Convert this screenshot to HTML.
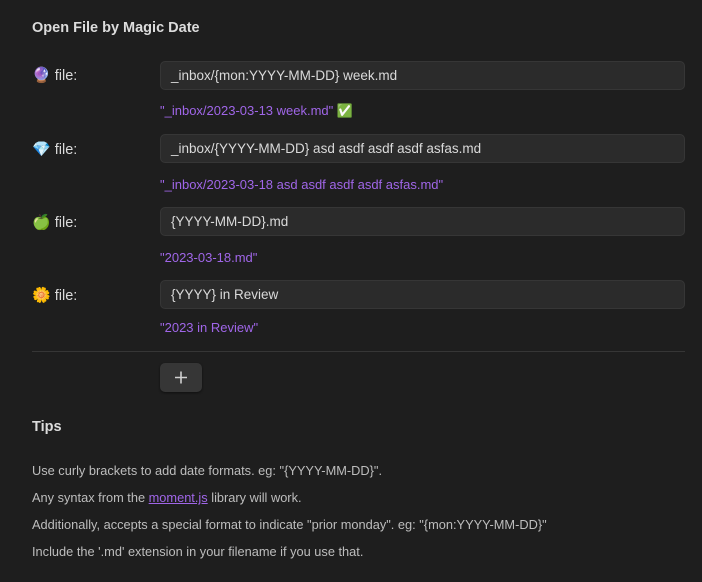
<!DOCTYPE html>
<html><head><meta charset="utf-8"><style>
body{margin:0;width:702px;height:582px;background:#1e1e1e;font-family:"Liberation Sans","Noto Sans CJK JP",sans-serif;color:#dadada;position:relative;overflow:hidden}
.a{position:absolute;white-space:nowrap}
h1{position:absolute;left:32px;top:20px;margin:0;font-size:14.5px;font-weight:bold;color:#dcdcdc}
.lab{font-size:14.5px;color:#dadada;left:32px}
.lab span{font-size:15px}
.in{position:absolute;left:160px;width:525px;height:29px;background:#2b2b2b;border:1px solid #363636;border-radius:5px;box-sizing:border-box;font-size:13.5px;line-height:27px;padding-left:10px;color:#dadada}
.pv{font-size:13px;color:#a066e8;left:160px}
.tip{font-size:12.8px;color:#bdbdbd;left:32px}
a{color:#a066e8;text-decoration:underline}
</style></head><body>
<h1>Open File by Magic Date</h1>
<div class="a lab" style="top:66px"><span>🔮</span> file:</div>
<div class="in" style="top:61px">_inbox/{mon:YYYY-MM-DD} week.md</div>
<div class="a pv" style="top:103px">"_inbox/2023-03-13 week.md" ✅</div>
<div class="a lab" style="top:140px"><span>💎</span> file:</div>
<div class="in" style="top:134px">_inbox/{YYYY-MM-DD} asd asdf asdf asdf asfas.md</div>
<div class="a pv" style="top:177px">"_inbox/2023-03-18 asd asdf asdf asdf asfas.md"</div>
<div class="a lab" style="top:213px"><span>🍏</span> file:</div>
<div class="in" style="top:207px">{YYYY-MM-DD}.md</div>
<div class="a pv" style="top:250px">"2023-03-18.md"</div>
<div class="a lab" style="top:286px"><span>🌼</span> file:</div>
<div class="in" style="top:280px">{YYYY} in Review</div>
<div class="a pv" style="top:320px">"2023 in Review"</div>
<div class="a" style="left:32px;top:351px;width:653px;height:1px;background:#363636"></div>
<div class="a" style="left:160px;top:363px;width:42px;height:29px;background:#363636;border-radius:5px;box-shadow:0 1px 2px rgba(0,0,0,.5)">
<svg width="42" height="29"><path d="M21 8.5v12M15 14.5h12" stroke="#d0d0d0" stroke-width="1.6"/></svg></div>
<div class="a" style="left:32px;top:419px;font-size:14.5px;font-weight:bold;color:#dcdcdc">Tips</div>
<div class="a tip" style="top:463px">Use curly brackets to add date formats. eg: "{YYYY-MM-DD}".</div>
<div class="a tip" style="top:490px">Any syntax from the <a>moment.js</a> library will work.</div>
<div class="a tip" style="top:517px">Additionally, accepts a special format to indicate "prior monday". eg: "{mon:YYYY-MM-DD}"</div>
<div class="a tip" style="top:544px">Include the '.md' extension in your filename if you use that.</div>
</body></html>
